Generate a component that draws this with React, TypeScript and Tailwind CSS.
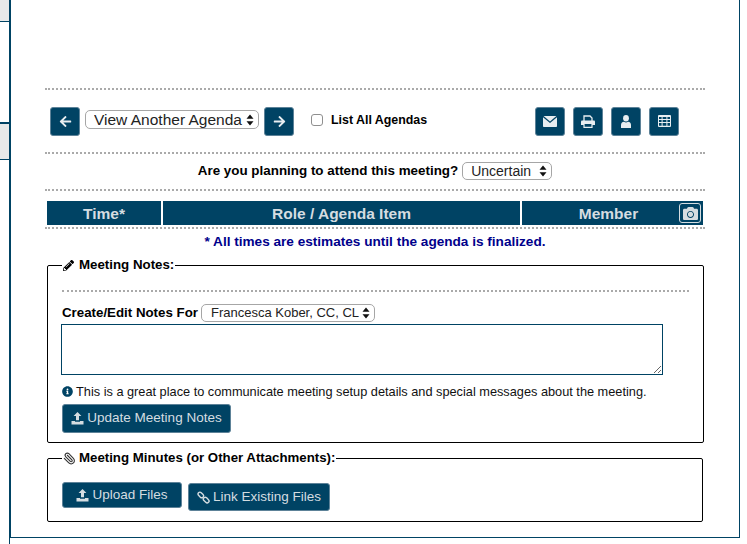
import { FaArrowLeft, FaArrowRight, FaCamera, FaPencilAlt, FaInfoCircle } from 'react-icons/fa';
import { Paperclip } from 'lucide-react';
import type { ReactNode } from 'react';

const SelectArrows = () => (
	<svg width="8" height="12" viewBox="0 0 8 12" className="absolute right-[5px] top-1/2 -translate-y-1/2 pointer-events-none">
		<path d="M4 0.5 L7.5 4.8 H0.5 Z M4 11.5 L7.5 7.2 H0.5 Z" fill="#111" />
	</svg>
);

const UploadIcon = () => (
	<svg width="13" height="13" viewBox="0 0 13 13" fill="currentColor">
		<path d="M6.5 0 L10.4 4 H8 V8.3 H5 V4 H2.6 Z" />
		<path d="M0.5 9 H4 V9.8 H9 V9 H12.5 V12.6 H0.5 Z" />
	</svg>
);

const ChainIcon = () => (
	<svg width="13" height="13" viewBox="0 0 13 13" fill="none" stroke="currentColor" strokeWidth="1.4">
		<rect x="0.6" y="2" width="6.4" height="3.8" rx="1.9" transform="rotate(45 3.8 3.9)" />
		<rect x="6" y="7.2" width="6.4" height="3.8" rx="1.9" transform="rotate(45 9.2 9.1)" />
	</svg>
);

const MailIcon = () => (
	<svg width="14" height="11" viewBox="0 0 14 11" fill="currentColor">
		<path d="M0.6 0 H13.4 L7 5.4 Z" />
		<path d="M0 1.2 L7 7.1 L14 1.2 V10.2 Q14 11 13.2 11 H0.8 Q0 11 0 10.2 Z" />
	</svg>
);

const PrintIcon = () => (
	<svg width="14" height="13" viewBox="0 0 14 13" fill="none" stroke="currentColor">
		<path d="M3 6 V1 H9 L11 3 V6" strokeWidth="1.3" />
		<path d="M1 5.5 H13 Q14 5.5 14 6.5 V10 H0 V6.5 Q0 5.5 1 5.5 Z" fill="currentColor" stroke="none" />
		<path d="M3 8.5 H11 V12.4 H3 Z" fill="#004364" strokeWidth="1.2" />
	</svg>
);

const UserIcon = () => (
	<svg width="10" height="13" viewBox="0 0 10 13" fill="currentColor">
		<ellipse cx="5" cy="3.2" rx="2.9" ry="3.2" />
		<path d="M0 13 V10 Q0 7 3 6.8 Q5 8 7 6.8 Q10 7 10 10 V13 Z" />
	</svg>
);

const GridIcon = () => (
	<svg width="13" height="12" viewBox="0 0 13 12" fill="currentColor">
		<path fillRule="evenodd" d="M1 0 H12 Q13 0 13 1 V11 Q13 12 12 12 H1 Q0 12 0 11 V1 Q0 0 1 0 Z M1 2 V4 H3.6 V2 Z M4.6 2 V4 H8.4 V2 Z M9.4 2 V4 H12 V2 Z M1 5 V7 H3.6 V5 Z M4.6 5 V7 H8.4 V5 Z M9.4 5 V7 H12 V5 Z M1 8 V10.8 H3.6 V8 Z M4.6 8 V10.8 H8.4 V8 Z M9.4 8 V10.8 H12 V8 Z" />
	</svg>
);

const IconButton = ({ children }: { children: ReactNode }) => (
	<button className="w-[30px] h-[29px] rounded-[3px] bg-[#004364] border border-[#5d8298] text-[#e8eef1] flex items-center justify-center">
		{children}
	</button>
);

const Dots = () => <div className="border-t-2 border-dotted border-[#aaaaaa] h-0" />;

const App = () => {
	return (
		<div className="w-[747px] h-[544px] overflow-hidden bg-white flex font-['Liberation_Sans',Arial,sans-serif] text-black">
			<div className="w-[9px] shrink-0">
				<div className="h-[22px] bg-[#e8e9e9] border-b border-[#004364]" />
				<div className="h-[100px]" />
				<div className="h-[38px] bg-[#e8e9e9] border-t-2 border-b border-[#004364]" />
			</div>
			<div className="w-[731px] shrink-0">
				<div className="h-[538px] border-l-2 border-r border-b border-[#004364] pl-[34px] pr-[34px] pt-[88px]">
					<Dots />
					<div className="h-[62px] flex items-center pl-[5px]">
						<IconButton><FaArrowLeft size={13} /></IconButton>
						<div className="relative ml-[5px] -mt-[3px]">
							<select className="block appearance-none w-[174px] h-[19px] rounded-[5px] border border-[#a6a6a6] bg-white pl-[8px] text-[15.5px] leading-[17px] text-[#222]">
								<option>View Another Agenda</option>
							</select>
							<SelectArrows />
						</div>
						<div className="ml-[5px]"><IconButton><FaArrowRight size={13} /></IconButton></div>
						<input type="checkbox" className="ml-[17px] -mt-[3px] w-[12px] h-[12px] appearance-none rounded-[3px] border border-[#8f8f8f] bg-white" />
						<span className="ml-[8px] -mt-[2px] text-[12.4px] font-bold">List All Agendas</span>
						<div className="ml-auto mr-[26px] flex gap-[8px]">
							<IconButton><MailIcon /></IconButton>
							<IconButton><PrintIcon /></IconButton>
							<IconButton><UserIcon /></IconButton>
							<IconButton><GridIcon /></IconButton>
						</div>
					</div>
					<Dots />
					<div className="h-[35px] flex items-center justify-center gap-[4px] pb-[1px]">
						<span className="text-[13.4px] font-bold">Are you planning to attend this meeting?</span>
						<div className="relative">
							<select className="block appearance-none w-[90px] h-[18px] rounded-[5px] border border-[#a6a6a6] bg-white pl-[8px] text-[14px] leading-[16px] text-[#222]">
								<option>Uncertain</option>
							</select>
							<SelectArrows />
						</div>
					</div>
					<Dots />
					<div className="flex gap-[2px] ml-[2px] mt-[10px] w-[656px] h-[24px] text-[#d5dde1] text-[15.5px] font-bold">
						<div className="w-[114px] bg-[#004364] flex items-center justify-center pt-[1px]">Time*</div>
						<div className="w-[357px] bg-[#004364] flex items-center justify-center pt-[1px]">Role / Agenda Item</div>
						<div className="flex-1 relative bg-[#004364] flex items-center justify-center pr-[8px] pt-[1px]">
							Member
							<span className="absolute right-[2px] top-[2px] w-[22px] h-[20px] rounded-[3px] border border-[#d5dde1] flex items-center justify-center">
								<FaCamera size={15} />
							</span>
						</div>
					</div>
					<div className="mt-[2px] w-[660px]"><Dots /></div>
					<div className="mt-[5px] h-[16px] flex items-center justify-center text-[13.6px] font-bold text-[#00008b]">
						* All times are estimates until the agenda is finalized.
					</div>
					<fieldset className="mt-[7px] ml-[2px] w-[656px] h-[186px] border border-black rounded-[2px] pl-[14px] pr-[14px]">
						<legend className="px-[1px] text-[13.3px] font-bold leading-[16px] flex items-center gap-[5px]">
							<FaPencilAlt size={11} /> Meeting Notes:
						</legend>
						<div className="mt-[17px] w-[627px]"><Dots /></div>
						<div className="mt-[11px] flex items-center gap-[3px]">
							<span className="text-[13.3px] font-bold">Create/Edit Notes For</span>
							<div className="relative">
								<select className="block appearance-none w-[174px] h-[18px] rounded-[5px] border border-[#a6a6a6] bg-white pl-[9px] text-[13px] leading-[16px] text-[#222]">
									<option>Francesca Kober, CC, CL</option>
								</select>
								<SelectArrows />
							</div>
						</div>
						<textarea className="block mt-[1px] -ml-[1px] w-[602px] h-[51px] border border-[#004364] bg-white resize-y" />
						<div className="mt-[7px] flex items-center gap-[3px] text-[12.75px] text-[#111]">
							<FaInfoCircle size={11} className="text-[#004364]" />
							This is a great place to communicate meeting setup details and special messages about the meeting.
						</div>
						<button className="mt-[3px] h-[29px] w-[169px] rounded-[3px] bg-[#004364] border border-[#5d8298] text-[#d5dde1] text-[13.5px] flex items-center justify-center gap-[3px]">
							<UploadIcon /> Update Meeting Notes
						</button>
					</fieldset>
					<fieldset className="mt-[7px] ml-[2px] w-[656px] h-[72px] border border-black rounded-[2px] pl-[14px] pr-[14px]">
						<legend className="px-[1px] text-[13.25px] font-bold leading-[16px] flex items-center gap-[3px]">
							<Paperclip size={13} strokeWidth={2} className="text-[#333] -scale-x-100" /> Meeting Minutes (or Other Attachments):
						</legend>
						<div className="mt-[16px] flex items-start gap-[6px]">
							<button className="h-[26px] w-[120px] rounded-[3px] bg-[#004364] border border-[#5d8298] text-[#d5dde1] text-[13.5px] flex items-center justify-center gap-[3px]">
								<UploadIcon /> Upload Files
							</button>
							<button className="mt-[1px] h-[28px] w-[142px] rounded-[3px] bg-[#004364] border border-[#5d8298] text-[#d5dde1] text-[13.5px] flex items-center justify-center gap-[3px]">
								<ChainIcon /> Link Existing Files
							</button>
						</div>
					</fieldset>
				</div>
				<div className="w-px h-[6px] bg-[#004364]" />
			</div>
		</div>
	);
};

export default App;
